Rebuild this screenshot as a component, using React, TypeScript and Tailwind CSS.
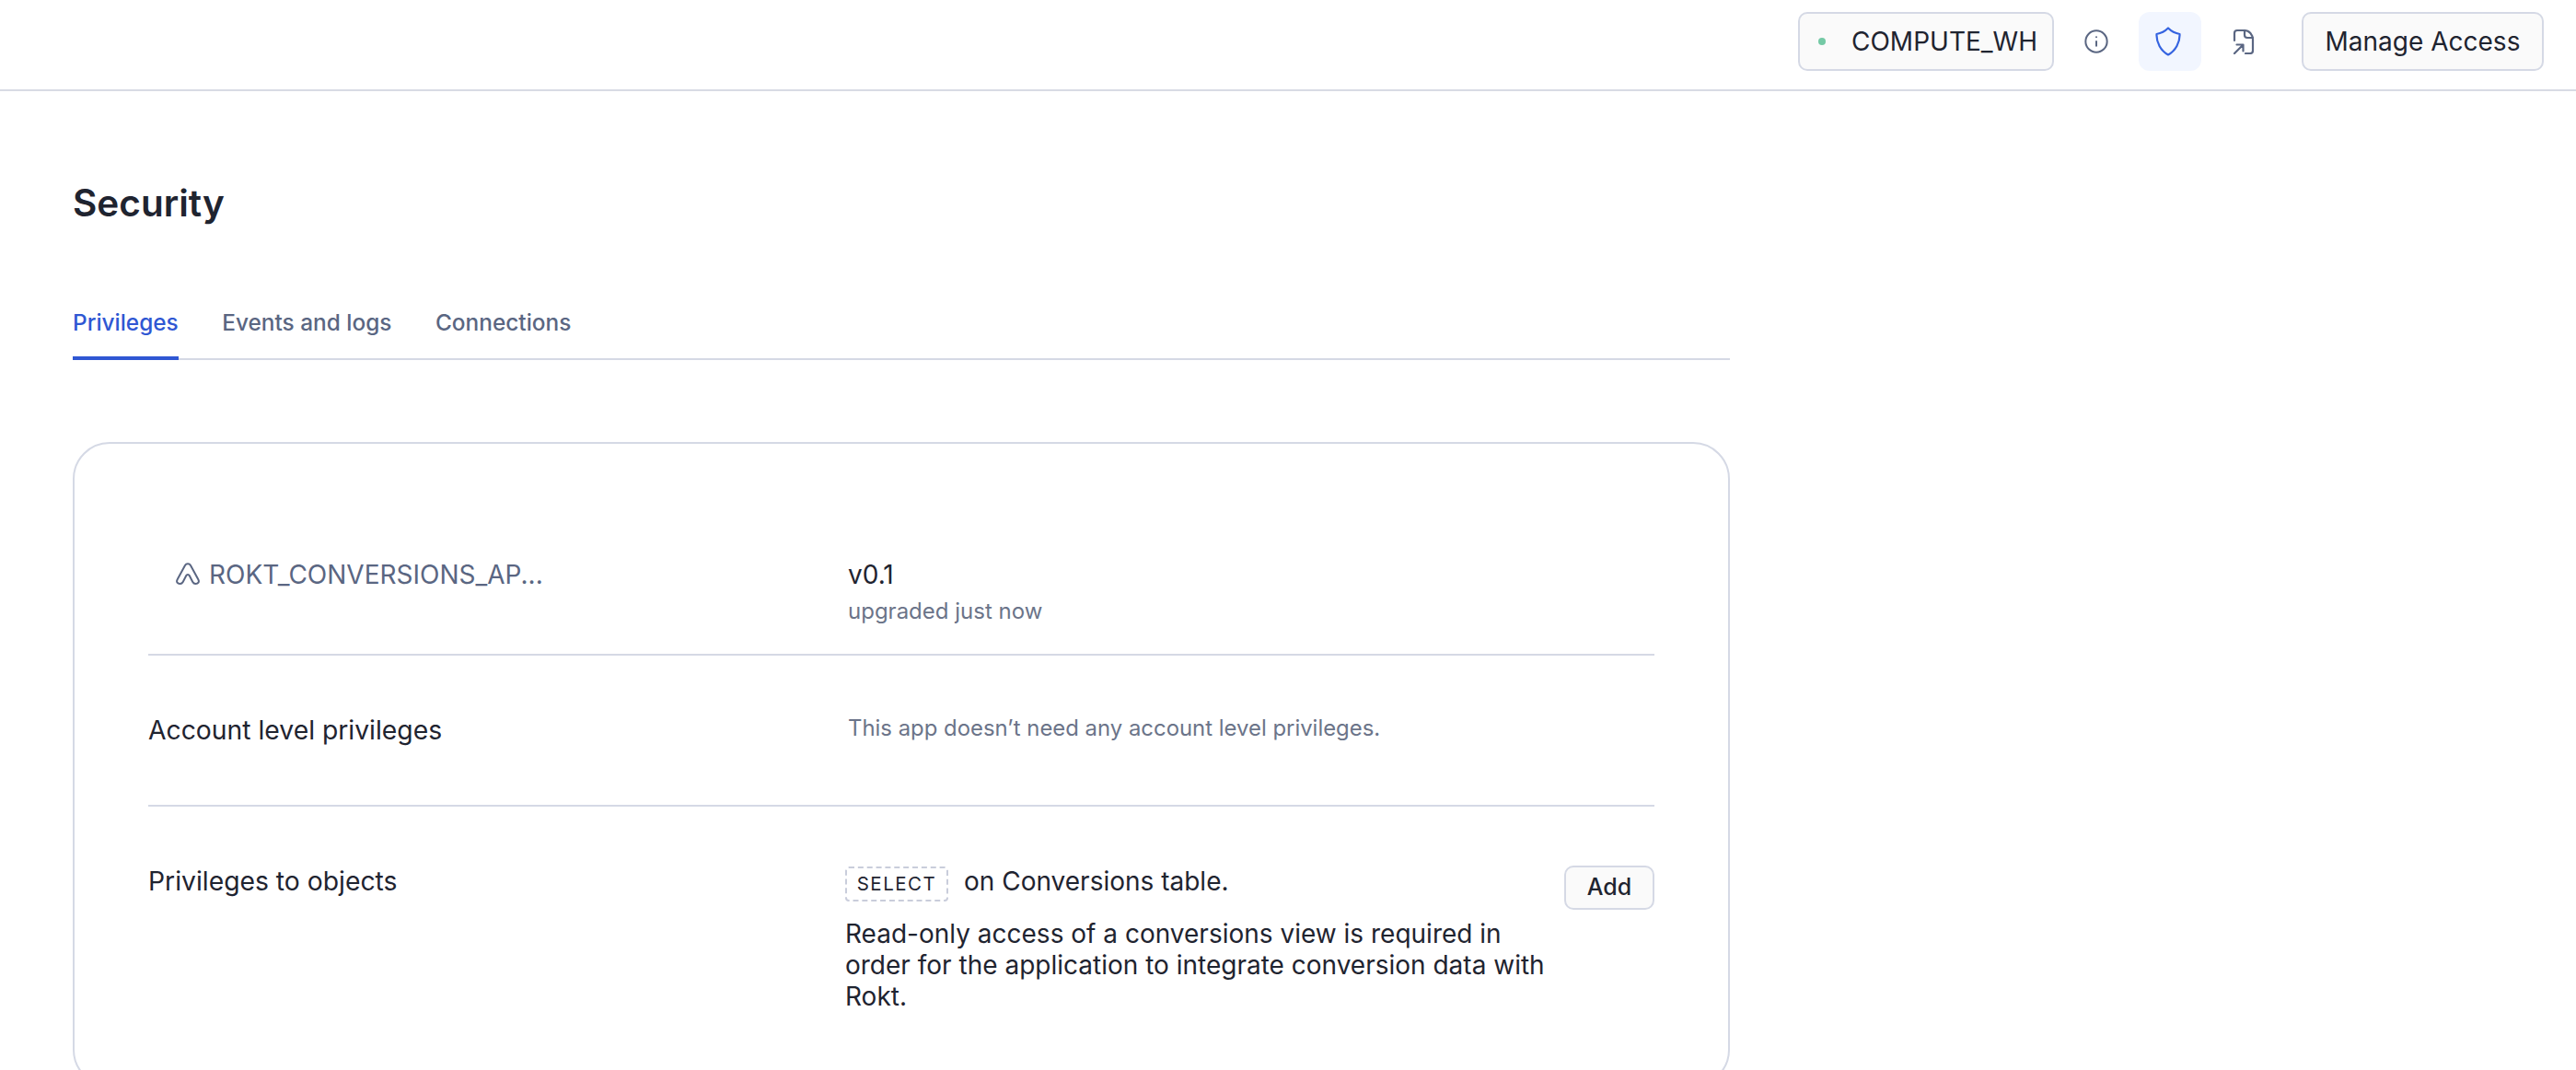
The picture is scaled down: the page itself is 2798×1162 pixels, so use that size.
import { Info } from "lucide-react";

function AppLogo() {
  return (
    <svg width="26" height="24" viewBox="0 0 26 24" fill="none" stroke="#5a6682" strokeWidth="2" strokeLinejoin="round">
      <path d="M10 3C11.300 0.800 14.700 0.800 16 3L24.200 18C26 21 24 23 21.500 23C20 23 19 22.300 18.300 21L14.700 14C14 12.700 12 12.700 11.300 14L7.700 21C7 22.300 6 23 4.500 23C2 23 0 21 1.800 18Z" />
    </svg>
  );
}

function ShieldIcon() {
  return (
    <svg width="28" height="32" viewBox="0 0 28 32" fill="none" stroke="#3563e0" strokeWidth="2.2" strokeLinejoin="round">
      <path d="M14 1.5C17 4.5 21 7 26.5 8C27 17 22 26 14 30.5C6 26 1 17 1.5 8C7 7 11 4.5 14 1.5Z" />
    </svg>
  );
}

function FileLinkIcon() {
  return (
    <svg width="24" height="28" viewBox="0 0 24 28" fill="none" stroke="#5a6682" strokeWidth="2.2" strokeLinecap="round" strokeLinejoin="round">
      <path d="M2 13V5a3 3 0 0 1 3-3h8c5 0 9 4.500 9 10v12a3 3 0 0 1-3 3h-5" />
      <path d="M13 2v5a3 3 0 0 0 3 3h6" />
      <path d="M2 27l9-9M4.500 17.500h7v7" />
    </svg>
  );
}

export default function App() {
  return (
    <div className="h-[1162px] overflow-hidden bg-white font-['Inter',sans-serif] text-[28px] text-[#1f2430]">
      {/* Header */}
      <div className="flex h-[99px] items-start justify-end border-b-2 border-[#d8dbe4] pt-[13px] pr-[35px]">
        <button className="flex h-[64px] w-[278px] items-center rounded-[10px] border-2 border-[#d5d9e5] bg-[#fafafa] pl-[20px] text-[28px] leading-none">
          <span className="mr-[28px] h-[8px] w-[8px] rounded-full bg-[#74c9a5]" />
          COMPUTE_WH
        </button>
        <div className="ml-[12px] flex h-[64px] w-[68px] items-center justify-center rounded-[10px]">
          <Info size={28} strokeWidth={1.7} color="#5a6682" />
        </div>
        <div className="ml-[12px] flex h-[64px] w-[68px] items-center justify-center rounded-[12px] bg-[#f2f6ff] pr-[4px]">
          <ShieldIcon />
        </div>
        <div className="ml-[12px] flex h-[64px] w-[68px] items-center justify-center rounded-[10px]">
          <FileLinkIcon />
        </div>
        <button className="ml-[29px] flex h-[64px] w-[263px] items-center justify-center rounded-[10px] border-2 border-[#d5d9e5] bg-[#fafafa] text-[28px] leading-none">
          Manage Access
        </button>
      </div>

      {/* Main */}
      <div className="w-[1879px] pt-[98px] pl-[79px]">
        <h1 className="text-[40.5px] leading-[48px] font-semibold">Security</h1>

        <div className="mt-[77px] flex h-[69px] gap-[47.5px] border-b-2 border-[#d5d9e5] text-[24.4px] font-medium text-[#5a6682]">
          <div className="-mb-[2px] border-b-4 border-[#2f57d3] pt-[10px] text-[#2f57d3]">Privileges</div>
          <div className="pt-[10px]">Events and logs</div>
          <div className="pt-[10px]">Connections</div>
        </div>

        <div className="mt-[89px] h-[700px] rounded-[40px] border-2 border-[#d5d9e5] px-[80px] pt-[125px]">
          <div className="flex h-[105px] border-b-2 border-[#d5d9e5]">
            <div className="flex w-[760px] items-start gap-[10px] pl-[30px] text-[#5a6682]">
              <span className="pt-[4px]">
                <AppLogo />
              </span>
              <span className="leading-[34px]">ROKT_CONVERSIONS_AP...</span>
            </div>
            <div>
              <div className="leading-[34px]">v0.1</div>
              <div className="mt-[8px] text-[24px] leading-[30px] text-[#6b7489]">upgraded just now</div>
            </div>
          </div>

          <div className="flex h-[164px] border-b-2 border-[#d5d9e5] pt-[64px]">
            <div className="w-[760px] text-[28.3px] leading-[34px]">Account level privileges</div>
            <div className="text-[23.9px] leading-[30px] text-[#6b7489]">This app doesn’t need any account level privileges.</div>
          </div>

          <div className="flex pt-[63px]">
            <div className="mt-[1px] w-[757px] text-[28.3px] leading-[34px]">Privileges to objects</div>
            <div className="mt-[2px] w-[768px]">
              <div className="flex items-start gap-[17px] leading-[32px]">
                <span className="flex h-[38px] w-[112px] items-center justify-center rounded-[4px] border-2 border-dashed border-[#c9cddb] text-[20.5px] tracking-[1.5px]">
                  SELECT
                </span>
                on Conversions table.
              </div>
              <p className="mt-[18px] leading-[34px]">
                Read-only access of a conversions view is required in order for the application to integrate conversion data with Rokt.
              </p>
            </div>
            <button className="mt-[1px] ml-auto flex h-[48px] w-[98px] items-center justify-center rounded-[10px] border-2 border-[#d5d9e5] bg-[#fafafa] text-[25px] font-[450]">
              Add
            </button>
          </div>
        </div>
      </div>
    </div>
  );
}
